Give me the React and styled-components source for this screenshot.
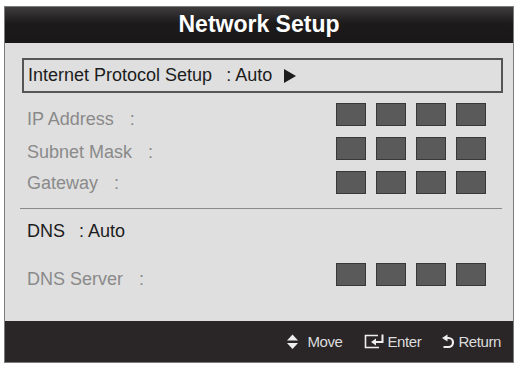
import React from 'react'
import styled, { createGlobalStyle } from 'styled-components'

const GlobalStyle = createGlobalStyle`
    body {
        margin: 0;
        background: #ffffff;
        font-family: "Liberation Sans", Arial, sans-serif;
    }
`

const Frame = styled.div`
    margin: 6px 6px 2px 4px;
    width: 510px;
    height: 357px;
    box-sizing: border-box;
    border: 1px solid #7c7c7c;
    background: #dfdfdf;
    display: flex;
    flex-direction: column;
`

const Header = styled.div`
    height: 36px;
    flex-shrink: 0;
    background: linear-gradient(to bottom, #3e3c3c 0%, #1c1a1a 45%, #191717 100%);
    color: #ffffff;
    font-weight: bold;
    font-size: 23px;
    display: flex;
    align-items: center;
    justify-content: center;
    padding-bottom: 2px;
    box-sizing: border-box;
`

const Body = styled.div`
    flex: 1;
    display: flex;
    flex-direction: column;
    padding: 15px 0 0 0;
`

const SelectedRow = styled.div`
    margin: 0 10px 0 17px;
    height: 35px;
    box-sizing: border-box;
    border: 2px solid #555555;
    display: flex;
    align-items: center;
    padding-left: 4px;
    font-size: 18px;
    color: #1c1c1c;
`

const Row = styled.div`
    height: 34px;
    display: flex;
    align-items: center;
    justify-content: space-between;
    padding: 0 27px 0 22px;
    margin-top: ${p => p.gap || 0}px;
`

const Label = styled.div`
    font-size: 18px;
    color: ${p => (p.active ? '#1c1c1c' : '#8a8a8a')};
    padding-top: ${p => p.drop || 0}px;
    white-space: nowrap;
`

const Colon = styled.span`
    margin-left: ${p => p.space || 16}px;
`

const Arrow = styled.svg`
    margin-left: 12px;
    display: block;
`

const Boxes = styled.div`
    display: flex;
    gap: 10px;
`

const Box = styled.div`
    width: 30px;
    height: 23px;
    box-sizing: border-box;
    background: #5a5a5a;
    border: 1px solid #383838;
`

const Divider = styled.div`
    height: 1px;
    background: #8a8a8a;
    margin: 9px 11px 5px 15px;
`

const Footer = styled.div`
    margin-top: auto;
    height: 41px;
    flex-shrink: 0;
    background: #2a2627;
    display: flex;
    align-items: center;
    justify-content: flex-end;
    padding-right: 12px;
    gap: 21px;
    color: #dcdcdc;
`

const Hint = styled.div`
    display: flex;
    align-items: center;
    gap: ${p => p.gap || 4}px;
    font-size: 15px;
    letter-spacing: -0.4px;
    svg {
        display: block;
    }
`

const BoxGroup = () => (
    <Boxes>
        <Box />
        <Box />
        <Box />
        <Box />
    </Boxes>
)

const MoveIcon = () => (
    <svg width="11" height="16" viewBox="0 0 11 16">
        <polygon points="5.5,0.5 11,6.5 0,6.5" fill="#eeeeee" />
        <polygon points="0,9 11,9 5.5,15" fill="#eeeeee" />
    </svg>
)

const EnterIcon = () => (
    <svg width="22" height="15" viewBox="0 0 22 15">
        <path d="M14 1.5H1.5v12H15" stroke="#eeeeee" strokeWidth="1.6" fill="none" />
        <path d="M18.5 0.5v7.5H11" stroke="#eeeeee" strokeWidth="2" fill="none" />
        <polygon points="7,8 12,4.5 12,11.5" fill="#eeeeee" />
    </svg>
)

const ReturnIcon = () => (
    <svg width="12" height="15" viewBox="0 0 12 15">
        <polygon points="0,4 5.5,0.5 5.5,7.5" fill="#eeeeee" />
        <path d="M4 4h2.5a4.5 4.5 0 0 1 0 9H1.5" stroke="#eeeeee" strokeWidth="2.2" fill="none" />
    </svg>
)

const App = () => {
    return (
        <>
            <GlobalStyle />
            <Frame>
                <Header>Network Setup</Header>
                <Body>
                    <SelectedRow>
                        Internet Protocol Setup<Colon space={14}>: Auto</Colon>
                        <Arrow width="12" height="14" viewBox="0 0 12 14">
                            <polygon points="0,0 12,7 0,14" fill="#1c1c1c" />
                        </Arrow>
                    </SelectedRow>

                    <Row gap={4}>
                        <Label drop={10}>IP Address<Colon>:</Colon></Label>
                        <BoxGroup />
                    </Row>
                    <Row>
                        <Label drop={9}>Subnet Mask<Colon>:</Colon></Label>
                        <BoxGroup />
                    </Row>
                    <Row>
                        <Label drop={3}>Gateway<Colon>:</Colon></Label>
                        <BoxGroup />
                    </Row>

                    <Divider />

                    <Row>
                        <Label active>DNS<Colon space={14}>: Auto</Colon></Label>
                    </Row>
                    <Row gap={9}>
                        <Label drop={10}>DNS Server<Colon>:</Colon></Label>
                        <BoxGroup />
                    </Row>

                    <Footer>
                        <Hint gap={9}><MoveIcon />Move</Hint>
                        <Hint gap={2}><EnterIcon />Enter</Hint>
                        <Hint gap={4}><ReturnIcon />Return</Hint>
                    </Footer>
                </Body>
            </Frame>
        </>
    )
}

export default App
